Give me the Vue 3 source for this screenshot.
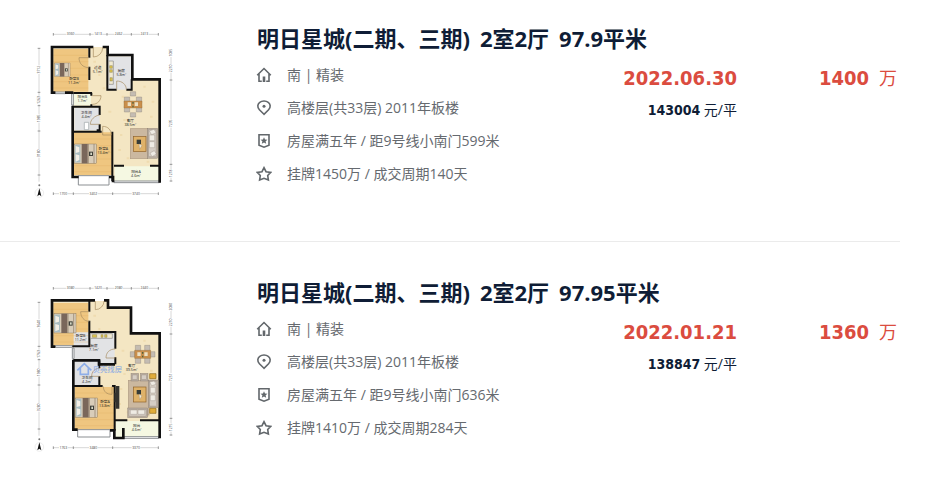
<template>
  <ul class="deal-list">
    <li v-for="deal in deals" :key="deal.area" class="deal-item">
      <svg class="plan" viewBox="0 0 450 540" role="img" aria-label="户型图">
        <!-- 尺寸线 -->
        <g class="dim-line">
          <path d="M70 28H385M27 70V470M423 75V470M70 506H385" />
          <path
            v-for="tick in ticks"
            :key="tick"
            :d="tick"
            class="dim-tick"
          />
        </g>
        <g class="dim-text">
          <g v-for="dim in deal.plan.dims" :key="dim.x + '-' + dim.y">
            <rect
              :x="dim.x - (dim.side ? 6 : 13)"
              :y="dim.y - (dim.side ? 13 : 6)"
              :width="dim.side ? 12 : 26"
              :height="dim.side ? 26 : 12"
              fill="#fff"
            />
            <text
              :x="dim.x"
              :y="dim.y + 3"
              :transform="dim.side ? `rotate(-90 ${dim.x} ${dim.y})` : null"
              >{{ dim.text }}</text
            >
          </g>
        </g>
        <!-- 指北针 -->
        <g>
          <circle cx="28" cy="504" r="13" fill="#fff" stroke="#ccc" />
          <path d="M28 490L34 514L28 509L22 514Z" fill="#111" />
          <circle cx="28" cy="481" r="3" fill="#777" />
        </g>
        <!-- 房间 -->
        <path :d="deal.plan.floor" fill="#f4e6c3" />
        <path
          d="M190 110h8M205 150h6M218 190h8M275 215h8M340 185h7M365 230h8M235 260h9M280 285h7M360 275h8M270 330h7M290 400h8M265 375h8M350 410h8"
          stroke="#efdcb0"
          stroke-width="6"
        />
        <path
          v-for="room in deal.plan.rooms"
          :key="room.d"
          :d="room.d"
          :fill="room.fill"
        />
        <path :d="deal.plan.boards" stroke="#e2b162" stroke-width="1" />
        <path :d="deal.plan.windows" fill="#fff" stroke="#8b8f92" stroke-width="3" />
        <path :d="deal.plan.walls" class="wall" />
        <path :d="deal.plan.inner" class="wall wall-thin" />
        <path :d="deal.plan.doors" class="door" />
        <!-- 床 -->
        <g
          v-for="bed in deal.plan.beds"
          :key="bed.y"
          :transform="`translate(${bed.x} ${bed.y}) scale(${bed.size})`"
        >
          <rect width="66" height="58" fill="#d9cdb9" stroke="#665a4d" />
          <rect x="1" y="3" width="17" height="52" fill="#a9bcc1" />
          <path d="M4 6l11 4v14l-11 3zM4 31l11 3v14l-11 5z" fill="#f4efe6" />
          <rect x="22" width="18" height="58" fill="#7a675b" />
          <path d="M42 0v58M59 0v58" stroke="#8c7864" stroke-width="2" />
          <rect x="44" y="23" width="12" height="13" fill="#3f4039" />
          <rect x="48" y="26" width="5" height="7" fill="#d7d8c6" />
        </g>
        <!-- 餐桌 -->
        <g :transform="`translate(${deal.plan.table.x} ${deal.plan.table.y})`">
          <path :d="deal.plan.table.chairs" fill="#c4bcb2" stroke="#80766d" />
          <path :d="deal.plan.table.top" fill="#c98f4c" stroke="#8a6030" />
          <path d="M-16 -6h10v11h-10zM5 -6h10v11h-10z" fill="#ece0c3" />
          <path d="M-2 -7h4v5h-4zM-2 4h4v5h-4z" fill="#50613b" />
        </g>
        <!-- 客厅家具 -->
        <rect
          :x="deal.plan.rug.x"
          :y="deal.plan.rug.y"
          :width="deal.plan.rug.w"
          :height="deal.plan.rug.h"
          fill="#cbb8a0"
          stroke="#b09c84"
          stroke-width="2"
        />
        <g :transform="`translate(${deal.plan.coffee.x} ${deal.plan.coffee.y})`">
          <rect width="38" height="45" fill="#dfb269" stroke="#8d6129" stroke-width="2" />
          <path d="M10 9h13v13h-13z" fill="#363c38" />
          <path d="M17 22l9 4-7 12z" fill="#f5edd8" stroke="#8b7860" />
        </g>
        <g
          v-for="sofa in deal.plan.sofas"
          :key="sofa.x + '-' + sofa.y"
          :transform="`translate(${sofa.x} ${sofa.y})`"
        >
          <rect :width="sofa.w" :height="sofa.h" fill="#b9ada1" stroke="#7d7066" />
          <rect
            x="4"
            y="5"
            :width="sofa.w - 9"
            :height="sofa.h - 10"
            fill="#d5cdc4"
            stroke="#998c80"
          />
        </g>
        <path :d="deal.plan.cushions" fill="#efebe4" stroke="#8b7f75" />
        <path :d="deal.plan.lamps" fill="#e0ac3a" stroke="#8e691c" stroke-width="2" />
        <path :d="deal.plan.tv" fill="#34332f" />
        <!-- 灶台、洁具 -->
        <path :d="deal.plan.counter" fill="#f1ead2" stroke="#888" stroke-width="2" />
        <path :d="deal.plan.stove" fill="#e0c64e" stroke="#5a5542" />
        <path :d="deal.plan.toilet" fill="#fff" stroke="#9ca3a6" stroke-width="2" />
        <g v-if="deal.plan.watermark" class="watermark">
          <path d="M142 274L163 254L184 274M151 268V286H175V268" />
          <text x="188" y="279">贝壳找房</text>
        </g>
        <g class="room-text">
          <text
            v-for="label in deal.plan.labels"
            :key="label.name"
            :x="label.x"
            :y="label.y"
            >{{ label.name
            }}<tspan :x="label.x" dy="12">{{ label.size }}</tspan></text
          >
        </g>
      </svg>
      <div class="info">
        <h3 class="title">
          <a href="#">
            <span>{{ deal.community }}</span>
            <span>{{ deal.layout }}</span>
            <span>{{ deal.area }}</span>
          </a>
        </h3>
        <div class="detail">
          <ul class="facts">
            <li v-for="(fact, i) in deal.facts" :key="fact">
              <svg class="icon" viewBox="0 0 16 16" aria-hidden="true">
                <path :d="icons[i].line" />
                <path v-if="icons[i].solid" class="solid" :d="icons[i].solid" />
              </svg>
              <span>{{ fact }}</span>
            </li>
          </ul>
          <div class="deal-date">
            <div class="date">{{ deal.date }}</div>
            <div class="unit-price">
              <b>{{ deal.unitPrice }}</b> 元/平
            </div>
          </div>
          <div class="total-price">
            <b>{{ deal.total }}</b>
            <span>万</span>
          </div>
        </div>
      </div>
    </li>
  </ul>
</template>

<script setup>
const icons = [
  // 房屋
  {
    line: "M1.2 8.2L8 1.5L14.8 8.2M3 7V14.3H5.8M13 7V14.3H10.2",
    solid: "M6.7 9.5H9.3V15H6.7Z",
  },
  // 位置
  {
    line: "M8 14.3L3.4 9.7C.9 7.1 1.6 3.8 3.7 2.3C6 .5 10 .5 12.3 2.3C14.4 3.8 15.1 7.1 12.6 9.7Z",
    solid: "M8 4.8A1.5 1.5 0 1 1 8 7.8A1.5 1.5 0 1 1 8 4.8Z",
  },
  // 徽章
  {
    line: "M3 1.7H13V12.2L8 14.2L3 12.2Z",
    solid:
      "M8 4.2L9 6.6L11.5 6.7L9.6 8.3L10.2 10.7L8 9.4L5.8 10.7L6.4 8.3L4.5 6.7L7 6.6Z",
  },
  // 星星
  {
    line: "M8 1.7L10 5.7L14.7 6.4L11.7 9.5L12.4 14L8 12.3L3.6 14L4.3 9.5L1.3 6.4L6 5.7Z",
  },
];

const ticks = [
  "M70 24v8M180 24v8M231 24v8M304 24v8M385 24v8",
  "M23 70h8M23 202h8M23 242h8M23 318h8M23 450h8",
  "M419 75h8M419 165h8M419 418h8M419 468h8",
  "M70 502v8M130 502v8M248 502v8M385 502v8",
];

const makeDims = (top, left, right, bottom) => [
  ...top.map((text, i) => ({ text, x: [122, 204, 266, 343][i], y: 28 })),
  ...left.map((text, i) => ({
    text,
    x: 27,
    y: [134, 225, 280, 385][i],
    side: true,
  })),
  ...right.map((text, i) => ({
    text,
    x: 423,
    y: [83, 130, 295, 445][i],
    side: true,
  })),
  ...bottom.map((text, i) => ({ text, x: [100, 190, 318][i], y: 506 })),
];

const WOOD = "#efc680";
const TILE = "#e2e3e5";
const BALCONY = "#f5f8e2";

const planA = {
  dims: makeDims(
    ["3060", "1413", "2462", "2413"],
    ["3712", "1263", "1985", "3180"],
    ["1085", "2210", "7235", "1218"],
    ["1700", "3402", "3740"]
  ),
  floor: "M66 66H232V90H306V163H389V467H252V452H130V203H66Z",
  rooms: [
    { d: "M70 72H175V200H70Z", fill: WOOD },
    { d: "M132 322H248V450H132Z", fill: WOOD },
    { d: "M233 94H303V194H233Z", fill: TILE },
    { d: "M133 248H209V316H133Z", fill: TILE },
    { d: "M131 206H183V241H131Z", fill: BALCONY },
    { d: "M254 424H387V468H254Z", fill: BALCONY },
  ],
  boards:
    "M70 91H175M70 110H175M70 130H175M70 150H175M70 170H175M70 189H175M133 342H248M133 362H248M133 382H248M133 402H248M133 422H248M133 440H248",
  windows:
    "M75 201H106V206H75ZM125 206H130V240H125ZM145 452V480H237V452ZM252 468H388V473H252Z",
  walls:
    "M190 66H66V203H76M105 203H130M218 66H233V90H307V163H389V473M128 242V456H146M237 456H249V472",
  inner:
    "M178 66V98M178 125V165M232 90V194H260M289 194H305V163M184 203V212M184 238V244M128 245H209V270M209 298V316H200M128 320H215M247 320V468M252 422H282M360 422H390M130 204H186",
  doors:
    "M190 68V96A28 28 0 0 0 218 68M178 98H147C147 115 158 128 178 128M260 194V168C276 168 289 178 289 194M187 212H213C213 226 203 238 187 238M209 298H181C181 284 194 272 209 270M218 304V330H244C244 315 234 304 218 304",
  beds: [
    { x: 74, y: 114, size: 0.7 },
    { x: 133, y: 357, size: 1 },
  ],
  table: {
    x: 309,
    y: 238,
    chairs:
      "M-26 -22h16v18h-16zM10 -22h16v18h-16zM-26 5h16v18h-16zM10 5h16v18h-16zM-8 -38h16v13h-16zM-8 25h16v13h-16z",
    top: "M-27 -10H27V11H-27Z",
  },
  rug: { x: 301, y: 311, w: 52, h: 90 },
  coffee: { x: 310, y: 335 },
  sofas: [{ x: 352, y: 310, w: 31, h: 90 }],
  cushions:
    "M358 318l14-5 6 10-13 6zM358 330h16v17h-16zM358 350h16v18h-16zM360 384l13-7 6 10-13 8z",
  counter: "M236 108H250V178H236Z",
  stove: "M239 122h8v8h-8zM239 134h8v8h-8zM240 158h7v10h-7z",
  toilet: "M163 292H176V314H163Z",
  labels: [
    { name: "卧室B", size: "11.2m²", x: 132, y: 165 },
    { name: "过道", size: "5.1m²", x: 203, y: 132 },
    { name: "厨房", size: "5.8m²", x: 274, y: 140 },
    { name: "阳台B", size: "1.7m²", x: 157, y: 220 },
    { name: "卫生间", size: "4.4m²", x: 169, y: 267 },
    { name: "客厅", size: "38.5m²", x: 301, y: 291 },
    { name: "卧室A", size: "13.4m²", x: 220, y: 376 },
    { name: "阳台A", size: "4.6m²", x: 318, y: 443 },
  ],
};

const planB = {
  dims: makeDims(
    ["3080", "1420", "2080", "2440"],
    ["3640", "1763", "1980", "3280"],
    ["2080", "2210", "7251", "1215"],
    ["1763", "3480", "3370"]
  ),
  floor: "M66 66H232V88H303V163H389V475H257V452H133V203H66Z",
  rooms: [
    { d: "M70 72H175V198H70Z", fill: WOOD },
    { d: "M134 324H252V452H134Z", fill: WOOD },
    { d: "M131 160H254V257H131Z", fill: TILE },
    { d: "M133 247H209V318H133Z", fill: TILE },
    { d: "M258 426H388V475H258Z", fill: BALCONY },
  ],
  boards:
    "M70 91H175M70 110H175M70 130H175M70 150H175M70 170H175M70 189H175M135 342H252M135 362H252M135 382H252M135 402H252M135 422H252M135 440H252",
  windows:
    "M76 200H127V205H76ZM127 207H132V239H127ZM143 452V474H240V452ZM282 473H386V478H282Z",
  walls:
    "M195 64H66V203H76M222 64H234V86H303V163H389V478M130 242V452H143M130 244H207V256H255M240 454H253V477H280V447",
  inner:
    "M178 66V98M178 125V202H127M178 159H256V209M256 235V256M208 244V268M208 292V320M130 321H218M246 321H254V455M255 424H292M330 424H390",
  doors:
    "M196 66V92A26 26 0 0 0 222 66M178 98H152C152 114 162 127 178 127M256 210C238 210 228 221 228 237H256M208 268C194 268 185 278 185 292H208M220 322C220 338 230 346 246 346V322",
  beds: [
    { x: 72, y: 104, size: 1 },
    { x: 136, y: 357, size: 1 },
  ],
  table: {
    x: 338,
    y: 226,
    chairs:
      "M-22 -27h16v18h-16zM6 -27h16v18h-16zM-22 9h16v18h-16zM6 9h16v18h-16zM-37 -8h14v16h-14zM23 -8h14v16h-14z",
    top: "M-24 -12H24V12H-24Z",
  },
  rug: { x: 295, y: 304, w: 62, h: 104 },
  coffee: { x: 310, y: 324 },
  sofas: [
    { x: 355, y: 303, w: 30, h: 83 },
    { x: 293, y: 387, w: 60, h: 29 },
    { x: 303, y: 283, w: 23, h: 23 },
    { x: 331, y: 283, w: 23, h: 23 },
  ],
  cushions:
    "M359 309l14-3 5 10-13 4zM361 325h15v17h-15zM361 348h15v17h-15zM301 393h20v13h-20zM324 393h20v13h-20z",
  lamps: "M359 284H378V299H359ZM359 388H378V403H359Z",
  tv: "M257 321H268V389H257ZM253 341H258V370H253Z",
  counter: "M181 164H247V178H181Z",
  stove: "M187 167h13v8h-13zM213 167h6v8h-6zM224 167h7v8h-7z",
  watermark: true,
  labels: [
    { name: "卧室B", size: "11.2m²", x: 152, y: 173 },
    { name: "厨房", size: "7.1m²", x: 192, y: 204 },
    { name: "卫生间", size: "4.2m²", x: 171, y: 300 },
    { name: "客厅", size: "39.5m²", x: 305, y: 264 },
    { name: "卧室A", size: "13.8m²", x: 225, y: 371 },
    { name: "阳台", size: "4.6m²", x: 320, y: 444 },
  ],
};

const deals = [
  {
    community: "明日星城(二期、三期)",
    layout: "2室2厅",
    area: "97.9平米",
    facts: [
      "南 | 精装",
      "高楼层(共33层) 2011年板楼",
      "房屋满五年 / 距9号线小南门599米",
      "挂牌1450万 / 成交周期140天",
    ],
    date: "2022.06.30",
    unitPrice: 143004,
    total: 1400,
    plan: planA,
  },
  {
    community: "明日星城(二期、三期)",
    layout: "2室2厅",
    area: "97.95平米",
    facts: [
      "南 | 精装",
      "高楼层(共33层) 2011年板楼",
      "房屋满五年 / 距9号线小南门636米",
      "挂牌1410万 / 成交周期284天",
    ],
    date: "2022.01.21",
    unitPrice: 138847,
    total: 1360,
    plan: planB,
  },
];
</script>

<style>
body {
  margin: 0;
  background: #fff;
}
</style>

<style scoped>
.deal-list {
  list-style: none;
  margin: 0 40px 0 0;
  padding: 0;
  font-family: "Open Sans", "Noto Sans CJK SC", sans-serif;
  color: #0f1d36;
}
.deal-item {
  display: flex;
  gap: 76px;
  padding: 24px 3px 36px 30px;
}
.deal-item + .deal-item {
  padding-top: 36px;
  border-top: 1px solid #ebebeb;
}
.plan {
  flex: none;
  width: 150px;
  height: 180px;
  margin-top: 1px;
}
.wall {
  fill: none;
  stroke: #111;
  stroke-width: 8;
}
.wall-thin {
  stroke-width: 6;
}
.door {
  fill: none;
  stroke: #a58a5e;
  stroke-width: 2;
}
.dim-line {
  fill: none;
  stroke: #c4c4c4;
  stroke-width: 2;
}
.dim-tick {
  stroke: #666;
}
.dim-text {
  font-size: 10px;
  text-anchor: middle;
  fill: #444;
}
.room-text {
  font-size: 11px;
  text-anchor: middle;
  fill: #222;
}
.watermark {
  font-size: 22px;
  font-weight: 700;
  fill: #7fa4e8;
  opacity: 0.7;
}
.watermark path {
  fill: none;
  stroke: #6b98ea;
  stroke-width: 5;
}
.info {
  flex: 1;
  min-width: 0;
}
.title {
  margin: 0 0 6px;
  padding-left: 1px;
  font-size: 22px;
  line-height: 28px;
  font-weight: 700;
}
.title a {
  display: flex;
  gap: 10px;
  color: inherit;
  text-decoration: none;
  white-space: nowrap;
}
.detail {
  display: flex;
}
.facts {
  flex: 1;
  list-style: none;
  margin: 0;
  padding: 0;
  font-size: 14px;
  color: #666a6f;
}
.facts li {
  display: flex;
  align-items: center;
  gap: 15px;
  height: 33px;
  white-space: nowrap;
}
.facts span {
  padding-bottom: 2px;
}
.icon {
  width: 16px;
  height: 16px;
  fill: none;
  stroke: #62676b;
  stroke-width: 1.6;
}
.icon .solid {
  fill: #62676b;
  stroke: none;
}
.deal-date {
  padding-top: 6px;
  text-align: right;
}
.date,
.total-price {
  font-size: 20px;
  line-height: 28px;
  color: #db4c3f;
}
.date,
b {
  font-family: "DejaVu Sans Condensed", "DejaVu Sans", sans-serif;
  font-weight: 700;
}
.unit-price {
  margin-top: 7px;
  font-size: 14px;
  line-height: 22px;
}
.total-price {
  display: flex;
  justify-content: flex-end;
  gap: 10px;
  width: 160px;
  padding-top: 6px;
}
.total-price span {
  font-size: 18px;
}
</style>
